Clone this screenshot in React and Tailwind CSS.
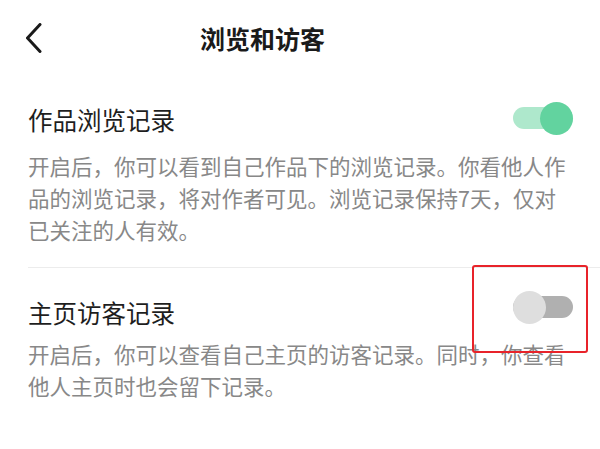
import React, { useState } from 'react';

const font = { fontFamily: '"Noto Sans CJK SC", "Noto Sans", sans-serif' };

const Toggle = ({ on, onClick, className = '' }) => (
  <button onClick={onClick} className={`relative flex h-[34px] w-[60px] shrink-0 items-center ${className}`}>
    <span
      className={`absolute left-0 right-0 h-[22px] rounded-full ${on ? 'bg-[#aee8cc]' : 'bg-[#b0b0b0]'}`}
    />
    <span
      className={`absolute h-[33px] w-[33px] rounded-full ${on ? 'right-0 bg-[#62d39f]' : 'left-0 bg-[#dedede]'}`}
    />
  </button>
);

export default function App() {
  const [works, setWorks] = useState(true);
  const [visitors, setVisitors] = useState(false);

  return (
    <div className="h-[449px] w-[600px] overflow-hidden bg-white" style={font}>
      {/* Header */}
      <div className="flex h-[80px] items-center pb-[4px] pl-[26px]">
        <svg width="16" height="30" viewBox="0 0 16 30" className="text-[#1a1a1a]">
          <polyline points="14,1.5 1.5,15 14,28.5" fill="none" stroke="currentColor" strokeWidth="3" strokeLinecap="round" strokeLinejoin="round" />
        </svg>
        <h1 className="ml-[158px] text-[25px] font-bold leading-none text-[#1a1a1a]">浏览和访客</h1>
      </div>

      {/* 作品浏览记录 */}
      <div className="pl-[28px] pt-[23px]">
        <div className="flex items-center justify-between pr-[27px]">
          <span className="text-[24.5px] leading-[34px] text-[#1e1e1e]">作品浏览记录</span>
          <Toggle on={works} onClick={() => setWorks(!works)} className="-translate-y-[2px]" />
        </div>
        <p className="mt-[13px] w-[545px] text-[21.5px] leading-[32px] text-[#888888]">
          开启后，你可以看到自己作品下的浏览记录。你看他人作品的浏览记录，将对作者可见。浏览记录保持7天，仅对已关注的人有效。
        </p>
        <div className="mt-[21px] h-px bg-[#ececec]" />
      </div>

      {/* 主页访客记录 */}
      <div className="relative pl-[28px] pt-[28px]">
        <div className="flex items-center justify-between pr-[27px]">
          <span className="text-[24.5px] leading-[34px] text-[#1e1e1e]">主页访客记录</span>
          <Toggle on={visitors} onClick={() => setVisitors(!visitors)} className="-translate-y-[6px]" />
        </div>
        <p className="mt-[8px] w-[545px] text-[21.5px] leading-[32px] text-[#888888]">
          开启后，你可以查看自己主页的访客记录。同时，你查看他人主页时也会留下记录。
        </p>
        <div className="pointer-events-none absolute left-[472px] top-[-3px] h-[88px] w-[116px] rounded-[3px] border-2 border-[#e8232a]" />
      </div>
    </div>
  );
}
